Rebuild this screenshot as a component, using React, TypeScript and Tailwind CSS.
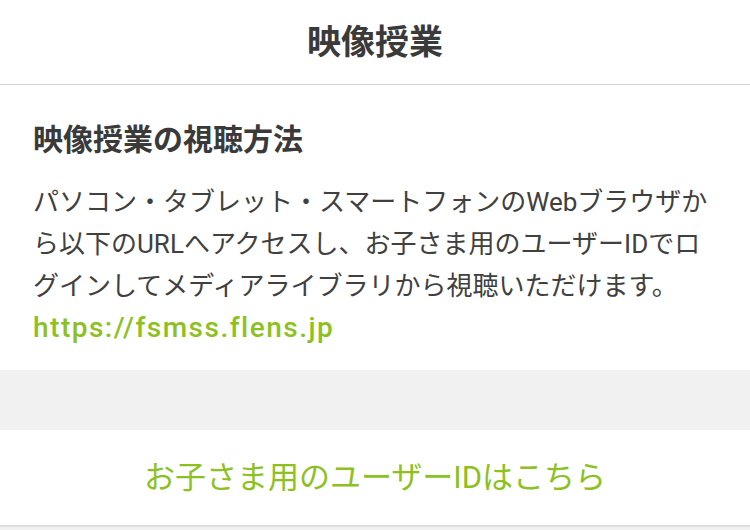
const jp = { fontFamily: 'Roboto, "Noto Sans CJK JP", sans-serif' };

export default function App() {
  return (
    <div className="w-[750px] h-[530px] bg-[#f1f1f1] overflow-hidden" style={jp}>
      {/* Header */}
      <header className="h-[85px] bg-white border-b border-[#d4d4d4] flex items-center justify-center">
        <h1 className="text-[34px] font-bold text-[#3a3a3a] leading-none">映像授業</h1>
      </header>

      {/* Content */}
      <section className="bg-white px-[33px] pt-[40px] pb-[21px]">
        <h2 className="text-[30px] font-bold text-[#3a3a3a] leading-none mb-[26px]">映像授業の視聴方法</h2>
        <p className="text-[26px] text-[#404040] leading-[42px]">
          パソコン・タブレット・スマートフォンのWebブラウザから以下のURLへアクセスし、お子さま用のユーザーIDでログインしてメディアライブラリから視聴いただけます。
        </p>
        <a className="block text-[28px] font-medium text-[#8cc11f] leading-[42px] tracking-[1.5px]">
          https://fsmss.flens.jp
        </a>
      </section>

      <div className="h-[60px]" />

      {/* Link row */}
      <div className="h-[97px] bg-white border-b-2 border-[#dedede] flex items-center justify-center">
        <span className="text-[31px] text-[#8cc11f] leading-none">お子さま用のユーザーIDはこちら</span>
      </div>
    </div>
  );
}
